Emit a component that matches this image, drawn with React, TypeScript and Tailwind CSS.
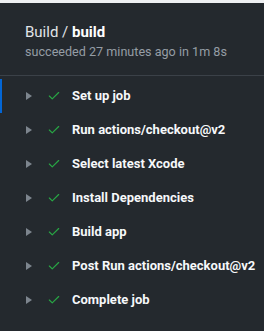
import { Check } from 'lucide-react';

const steps = [
  'Set up job',
  'Run actions/checkout@v2',
  'Select latest Xcode',
  'Install Dependencies',
  'Build app',
  'Post Run actions/checkout@v2',
  'Complete job',
];

const App = () => {
  return (
    <div className="w-[264px] h-[331px] bg-[#24292e] border-t-[3px] border-[#eef0f2] font-['Roboto','Liberation_Sans',Arial,sans-serif] overflow-hidden">
      {/* Header */}
      <div className="h-[73px] border-b border-[#3b4148] pl-[25px] pt-[20px]">
        <div className="text-[15px] leading-[18px] text-[#e1e4e8]">
          Build / <span className="font-bold text-white">build</span>
        </div>
        <div className="text-[12.6px] leading-[16px] mt-[3px] text-[#959da5]">
          succeeded 27 minutes ago in 1m 8s
        </div>
      </div>

      {/* Steps */}
      <div className="pt-[3px]">
        {steps.map((step, i) => (
          <div
            key={step}
            className={`flex items-center h-[34px] pl-[23px] border-l-2 ${
              i === 0 ? 'border-[#0366d6]' : 'border-transparent'
            }`}
          >
            <svg width="8" height="10" viewBox="0 0 8 10" className="shrink-0">
              <path d="M1 1 L7 5 L1 9 Z" fill="#7d858e" />
            </svg>
            <Check className="w-[14px] h-[14px] ml-[14px] text-[#28a745] shrink-0" strokeWidth={2} />
            <span className="ml-[11px] text-[13px] font-bold text-[#f6f8fa] whitespace-nowrap">
              {step}
            </span>
          </div>
        ))}
      </div>
    </div>
  );
};

export default App;
